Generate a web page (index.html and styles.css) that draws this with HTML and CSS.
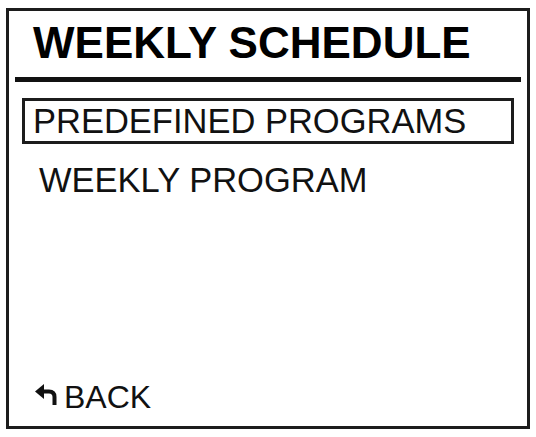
FILE: index.html
```html
<!DOCTYPE html>
<html>
<head>
<meta charset="utf-8">
<link rel="stylesheet" href="styles.css">
</head>
<body>
<div class="screen">
  <div class="title">WEEKLY SCHEDULE</div>
  <div class="rule"></div>
  <div class="menu">
    <div class="item selected">PREDEFINED PROGRAMS</div>
    <div class="item">WEEKLY PROGRAM</div>
  </div>
  <div class="back">
    <svg class="back-icon" width="23" height="21" viewBox="0 0 23 21">
      <polygon points="0,7.5 9,0 9,15" fill="#111"/>
      <path d="M8 7.5 H14 Q19.5 7.5 19.5 13 V21" fill="none" stroke="#111" stroke-width="4"/>
    </svg>
    <span>BACK</span>
  </div>
</div>
</body>
</html>
```
FILE: styles.css
```css
html, body {
  margin: 0;
  padding: 0;
  background: #fff;
}
body {
  width: 536px;
  height: 437px;
  padding: 8px 6px 0 6px;
  box-sizing: border-box;
  font-family: "Liberation Sans", Arial, sans-serif;
  color: #111;
}
.screen {
  box-sizing: border-box;
  width: 524px;
  height: 421px;
  border: 3px solid #1c1c1c;
  display: flex;
  flex-direction: column;
}
.title {
  font-weight: bold;
  font-size: 44px;
  line-height: 50px;
  color: #000;
  padding: 7px 0 0 24px;
}
.rule {
  height: 5px;
  background: #111;
  margin: 9px 6px 0 6px;
}
.menu {
  display: flex;
  flex-direction: column;
  margin: 16px 13px 0 13px;
  gap: 16px;
}
.item {
  font-size: 34.5px;
  line-height: 40px;
  padding-left: 17px;
}
.item.selected {
  border: 3px solid #1c1c1c;
  padding-left: 8px;
}
.back {
  margin-top: auto;
  padding: 0 0 9px 26px;
  display: flex;
  align-items: center;
  gap: 6px;
  font-size: 32px;
  line-height: 40px;
}
.back-icon {
  margin-top: -6px;
}
```
